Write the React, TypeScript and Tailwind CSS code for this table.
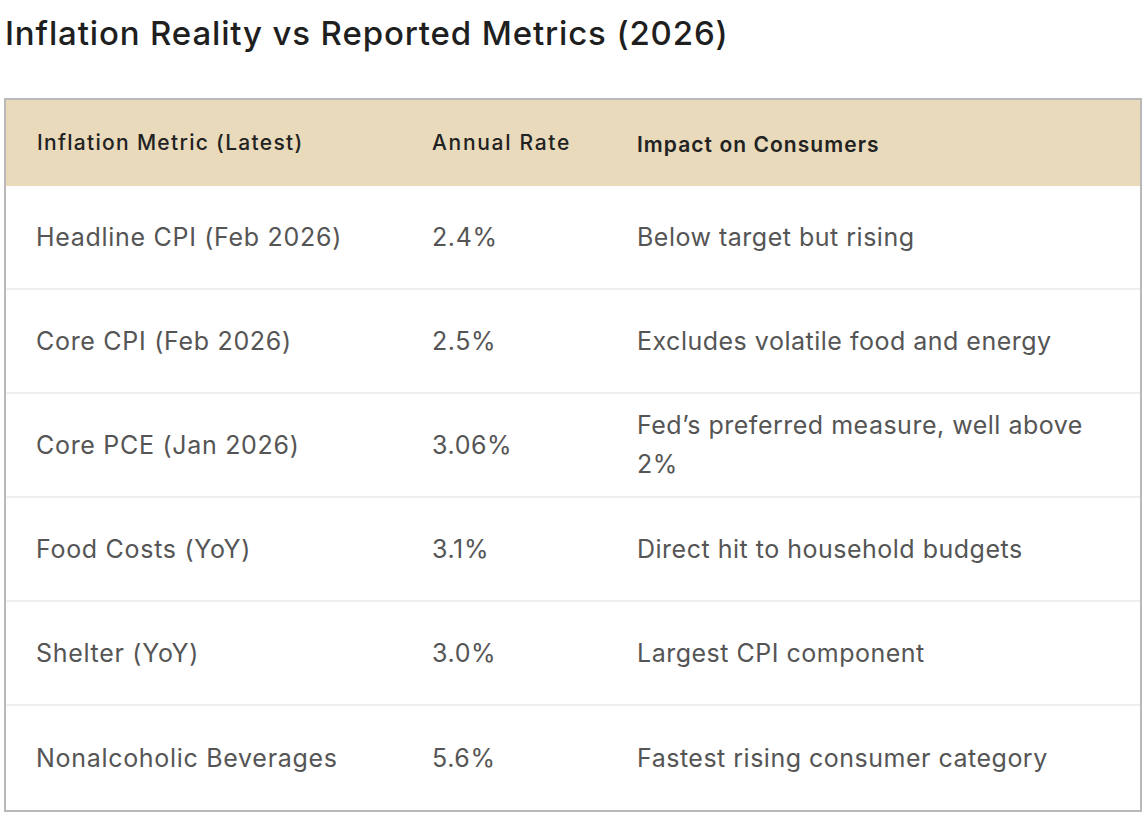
import React from "react";

const rows = [
  ["Headline CPI (Feb 2026)", "2.4%", "Below target but rising"],
  ["Core CPI (Feb 2026)", "2.5%", "Excludes volatile food and energy"],
  ["Core PCE (Jan 2026)", "3.06%", "Fed\u2019s preferred measure, well above 2%"],
  ["Food Costs (YoY)", "3.1%", "Direct hit to household budgets"],
  ["Shelter (YoY)", "3.0%", "Largest CPI component"],
  ["Nonalcoholic Beverages", "5.6%", "Fastest rising consumer category"],
];

export default function App() {
  return (
    <div className="bg-white w-[1146px] h-[816px] overflow-hidden" style={{ fontFamily: "Inter, 'Noto Sans', sans-serif" }}>
      <h1 className="pl-[5px] pt-[12px] text-[33px] leading-[42px] font-medium text-[#1f1f1f] tracking-[0.85px]">
        Inflation Reality vs Reported Metrics (2026)
      </h1>
      <div className="mt-[44px] ml-[4px] w-[1138px] border-2 border-[#b9b9b9]">
        <div className="grid grid-cols-[396px_205px_1fr] bg-[#e8dabb] h-[86px] items-center text-[21px] font-medium text-[#222] tracking-[1.3px]">
          <div className="pl-[31px]">Inflation Metric (Latest)</div>
          <div className="pl-[30px] tracking-[1.7px]">Annual Rate</div>
          <div className="pl-[30px] pt-[3px] font-semibold tracking-[1.05px]">Impact on Consumers</div>
        </div>
        {rows.map((r, i) => (
          <div
            key={i}
            className={`grid grid-cols-[396px_205px_1fr] h-[104px] items-center text-[25px] leading-[39px] text-[#555] ${i < rows.length - 1 ? "border-b-2 border-[#efefef]" : ""}`}
          >
            <div className="pl-[30px] tracking-[0.7px]">{r[0]}</div>
            <div className="pl-[30px] tracking-[0.6px]">{r[1]}</div>
            <div className="pl-[30px] pr-[36px] tracking-[0.5px]">{r[2]}</div>
          </div>
        ))}
      </div>
    </div>
  );
}
